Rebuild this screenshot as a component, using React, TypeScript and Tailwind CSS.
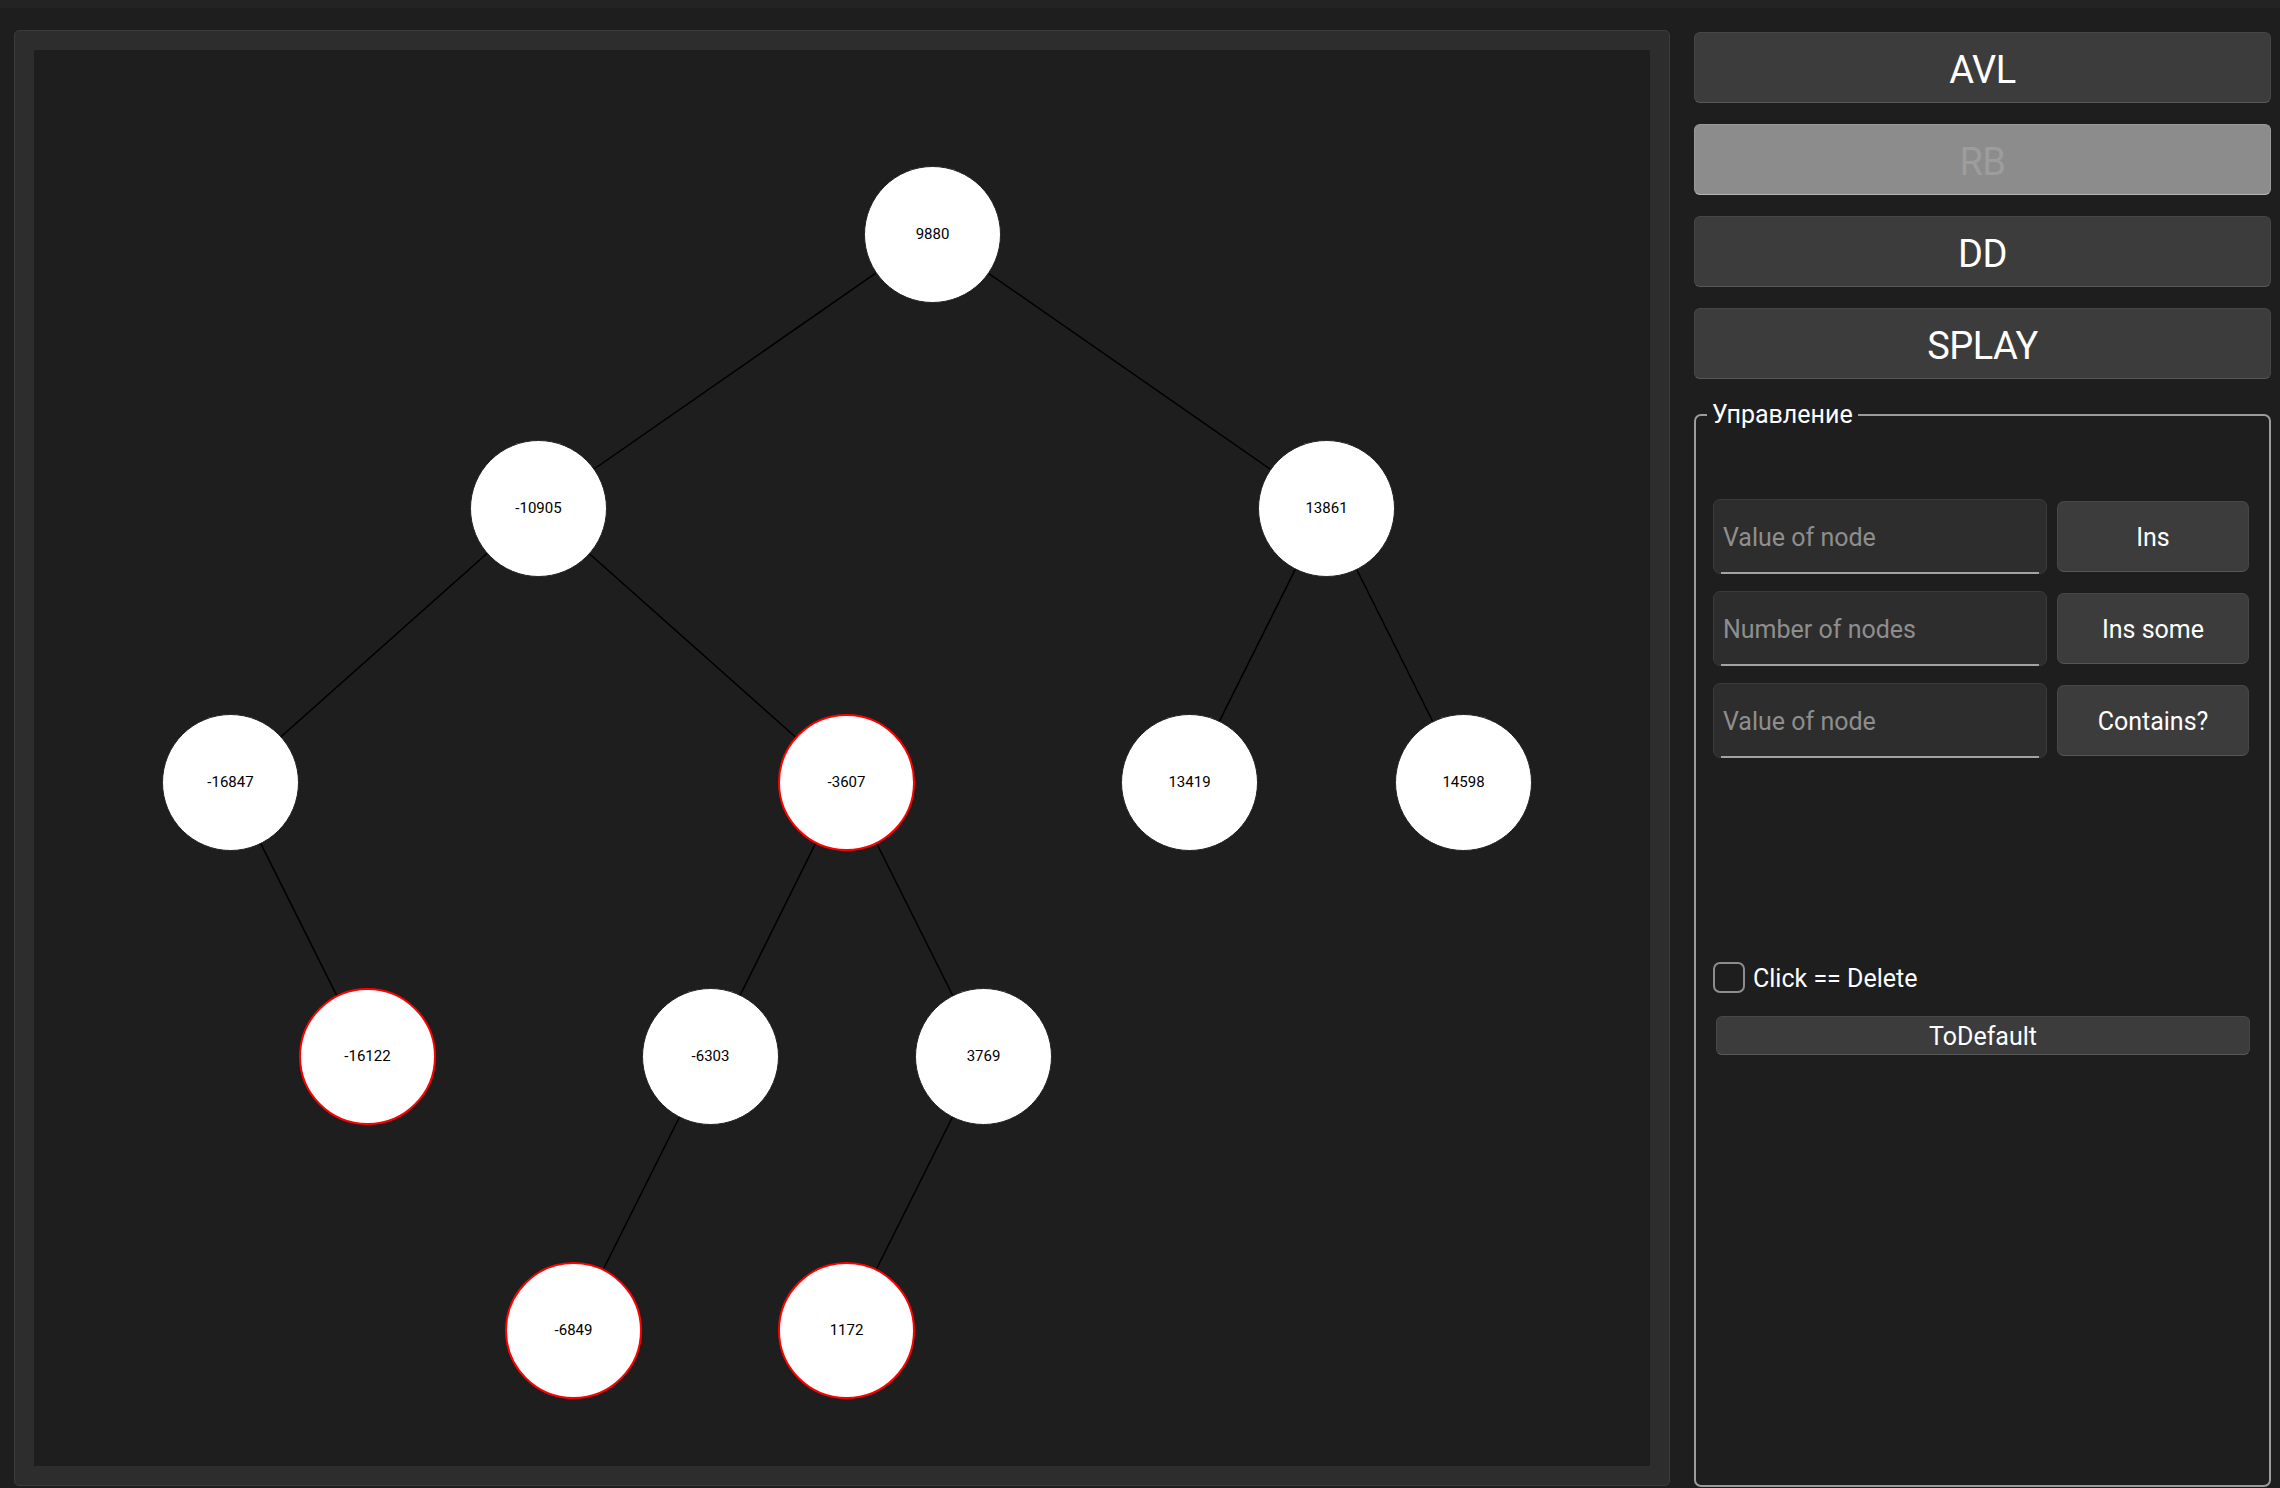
import React from "react";

type N = { v: string; x: number; y: number; red?: boolean };

const nodes: N[] = [
  { v: "9880", x: 898, y: 184 },
  { v: "-10905", x: 504, y: 458 },
  { v: "13861", x: 1292, y: 458 },
  { v: "-16847", x: 196, y: 732 },
  { v: "-3607", x: 812, y: 732, red: true },
  { v: "13419", x: 1155, y: 732 },
  { v: "14598", x: 1429, y: 732 },
  { v: "-16122", x: 333, y: 1006, red: true },
  { v: "-6303", x: 676, y: 1006 },
  { v: "3769", x: 949, y: 1006 },
  { v: "-6849", x: 539, y: 1280, red: true },
  { v: "1172", x: 812, y: 1280, red: true },
];

const edges: [number, number][] = [
  [0, 1],
  [0, 2],
  [1, 3],
  [1, 4],
  [2, 5],
  [2, 6],
  [3, 7],
  [4, 8],
  [4, 9],
  [8, 10],
  [9, 11],
];

const R = 68;

function BigButton({ label, disabled }: { label: string; disabled?: boolean }) {
  return (
    <div
      className={
        disabled
          ? "h-[71px] w-full rounded-[6px] border border-[#9a9a9a] border-b-[#b4b4b4] bg-[#8c8c8c] flex items-center justify-center pt-[5px] text-[38px] tracking-[-0.5px] text-[#9d9d9d]"
          : "h-[71px] w-full rounded-[6px] border border-[#464646] border-b-[#575757] bg-[#3c3c3c] flex items-center justify-center pt-[5px] text-[38px] tracking-[-0.5px] text-white"
      }
    >
      {label}
    </div>
  );
}

function Row({ placeholder, button }: { placeholder: string; button: string }) {
  return (
    <div className="flex items-center gap-[10px]">
      <div className="h-[75px] w-[334px] rounded-[7px] border border-[#3a3a3a] bg-[#2d2d2d] flex flex-col">
        <div className="flex-1 flex items-center pl-[9px] pt-[4px] text-[25px] text-[#8e8e8e]">{placeholder}</div>
        <div className="h-[2px] mx-[7px] mb-[-1px] bg-[#a2a2a2]" />
      </div>
      <div className="h-[71px] w-[192px] rounded-[7px] border border-[#474747] border-b-[#555555] bg-[#3c3c3c] flex items-center justify-center pt-[3px] text-[25px] text-white">
        {button}
      </div>
    </div>
  );
}

export default function App() {
  return (
    <div className="w-[2280px] h-[1488px] bg-[#1e1e1e] overflow-hidden font-['Roboto',sans-serif]">
      <div className="h-[8px] bg-[#232323]" />
      <div className="flex items-start pt-[22px] pl-[14px]">
        {/* left frame */}
        <div className="w-[1656px] h-[1456px] rounded-[5px] border border-[#3b3b3b] bg-[#2d2d2d] p-[19px] flex">
          <div className="relative flex-1 bg-[#1e1e1e] overflow-hidden">
            <svg className="absolute inset-0 w-full h-full">
              {edges.map(([a, b], i) => (
                <line
                  key={i}
                  x1={nodes[a].x}
                  y1={nodes[a].y}
                  x2={nodes[b].x}
                  y2={nodes[b].y}
                  stroke="#000000"
                  strokeWidth={1.5}
                />
              ))}
            </svg>
            {nodes.map((n) => (
              <div
                key={n.v}
                className={
                  n.red
                    ? "absolute w-[137px] h-[137px] rounded-full bg-white border-2 border-[#ff0000] flex items-center justify-center text-[15px] text-black"
                    : "absolute w-[137px] h-[137px] rounded-full bg-white border border-[#222222] flex items-center justify-center text-[15px] text-black"
                }
                style={{ left: n.x - R, top: n.y - R }}
              >
                {n.v}
              </div>
            ))}
          </div>
        </div>

        {/* right column */}
        <div className="ml-[24px] mt-[2px] w-[577px] h-[1455px] flex flex-col gap-[21px]">
          <BigButton label="AVL" />
          <BigButton label="RB" disabled />
          <BigButton label="DD" />
          <BigButton label="SPLAY" />
          <fieldset className="flex-1 min-h-0 rounded-[7px] border-2 border-[#9c9c9c] p-0 m-0">
            <legend className="ml-[11px] px-[5px] text-[25px] leading-[30px] text-white">Управление</legend>
            <div className="pl-[17px] pr-[19px] pt-[69px] flex flex-col">
              <div className="flex flex-col gap-[17px]">
                <Row placeholder="Value of node" button="Ins" />
                <Row placeholder="Number of nodes" button="Ins some" />
                <Row placeholder="Value of node" button="Contains?" />
              </div>
              <div className="mt-[204px] flex items-center gap-[8px] h-[31px]">
                <div className="w-[32px] h-[31px] rounded-[7px] border-2 border-[#8d8d8d]" />
                <span className="pt-[2px] text-[25px] text-white">Click == Delete</span>
              </div>
              <div className="mt-[23px] ml-[3px] h-[39px] rounded-[6px] border border-[#474747] border-b-[#595959] bg-[#3c3c3c] flex items-center justify-center pt-[2px] text-[25px] text-white">
                ToDefault
              </div>
            </div>
          </fieldset>
        </div>
      </div>
    </div>
  );
}
